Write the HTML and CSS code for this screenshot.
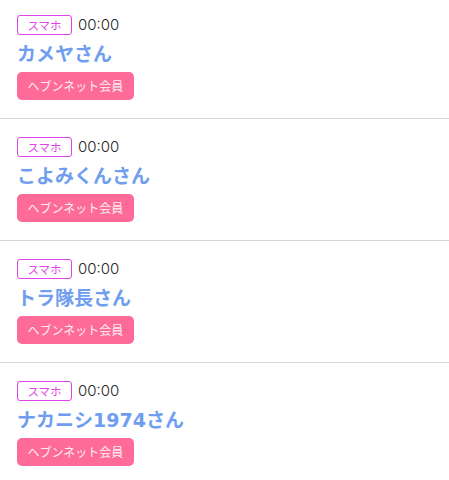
FILE: index.html
```html
<!DOCTYPE html>
<html lang="ja">
<head>
<meta charset="utf-8">
<link rel="stylesheet" href="styles.css">
</head>
<body>
<ul class="list">
  <li class="item">
    <div class="meta"><span class="device">スマホ</span><span class="time">00:00</span></div>
    <div class="name">カメヤさん</div>
    <span class="member">ヘブンネット会員</span>
  </li>
  <li class="item">
    <div class="meta"><span class="device">スマホ</span><span class="time">00:00</span></div>
    <div class="name">こよみくんさん</div>
    <span class="member">ヘブンネット会員</span>
  </li>
  <li class="item">
    <div class="meta"><span class="device">スマホ</span><span class="time">00:00</span></div>
    <div class="name">トラ隊長さん</div>
    <span class="member">ヘブンネット会員</span>
  </li>
  <li class="item">
    <div class="meta"><span class="device">スマホ</span><span class="time">00:00</span></div>
    <div class="name">ナカニシ1974さん</div>
    <span class="member">ヘブンネット会員</span>
  </li>
</ul>
</body>
</html>
```
FILE: styles.css
```css
html, body {
  margin: 0;
  padding: 0;
  background: #fff;
  font-family: "Noto Sans CJK JP", "Noto Sans", sans-serif;
}
.list {
  list-style: none;
  margin: -3px 0 0 0;
  padding: 0;
}
.item {
  display: flex;
  flex-direction: column;
  align-items: flex-start;
  padding: 18px 17px 17px;
  border-bottom: 1px solid #d6d6d6;
  box-sizing: border-box;
  height: 122px;
}
.meta {
  display: flex;
  align-items: center;
  gap: 6px;
  height: 20px;
}
.device {
  box-sizing: border-box;
  width: 55px;
  height: 20px;
  border: 1px solid #e043e8;
  border-radius: 3px;
  color: #e043e8;
  font-size: 11.5px;
  line-height: 18px;
  text-align: center;
}
.time {
  font-family: "Inter", "Noto Sans", sans-serif;
  font-size: 15px;
  font-weight: 300;
  color: #222;
  line-height: 20px;
}
.name {
  margin-top: 6px;
  font-family: "DejaVu Sans", "Noto Sans CJK JP", sans-serif;
  font-size: 19px;
  font-weight: bold;
  color: #6f9ef0;
  line-height: 26px;
  height: 26px;
}
.member {
  margin-top: 5px;
  box-sizing: border-box;
  width: 117px;
  height: 28px;
  border-radius: 5px;
  background: #fe6b98;
  color: #fdeef3;
  font-size: 12px;
  line-height: 28px;
  text-align: center;
}
```
